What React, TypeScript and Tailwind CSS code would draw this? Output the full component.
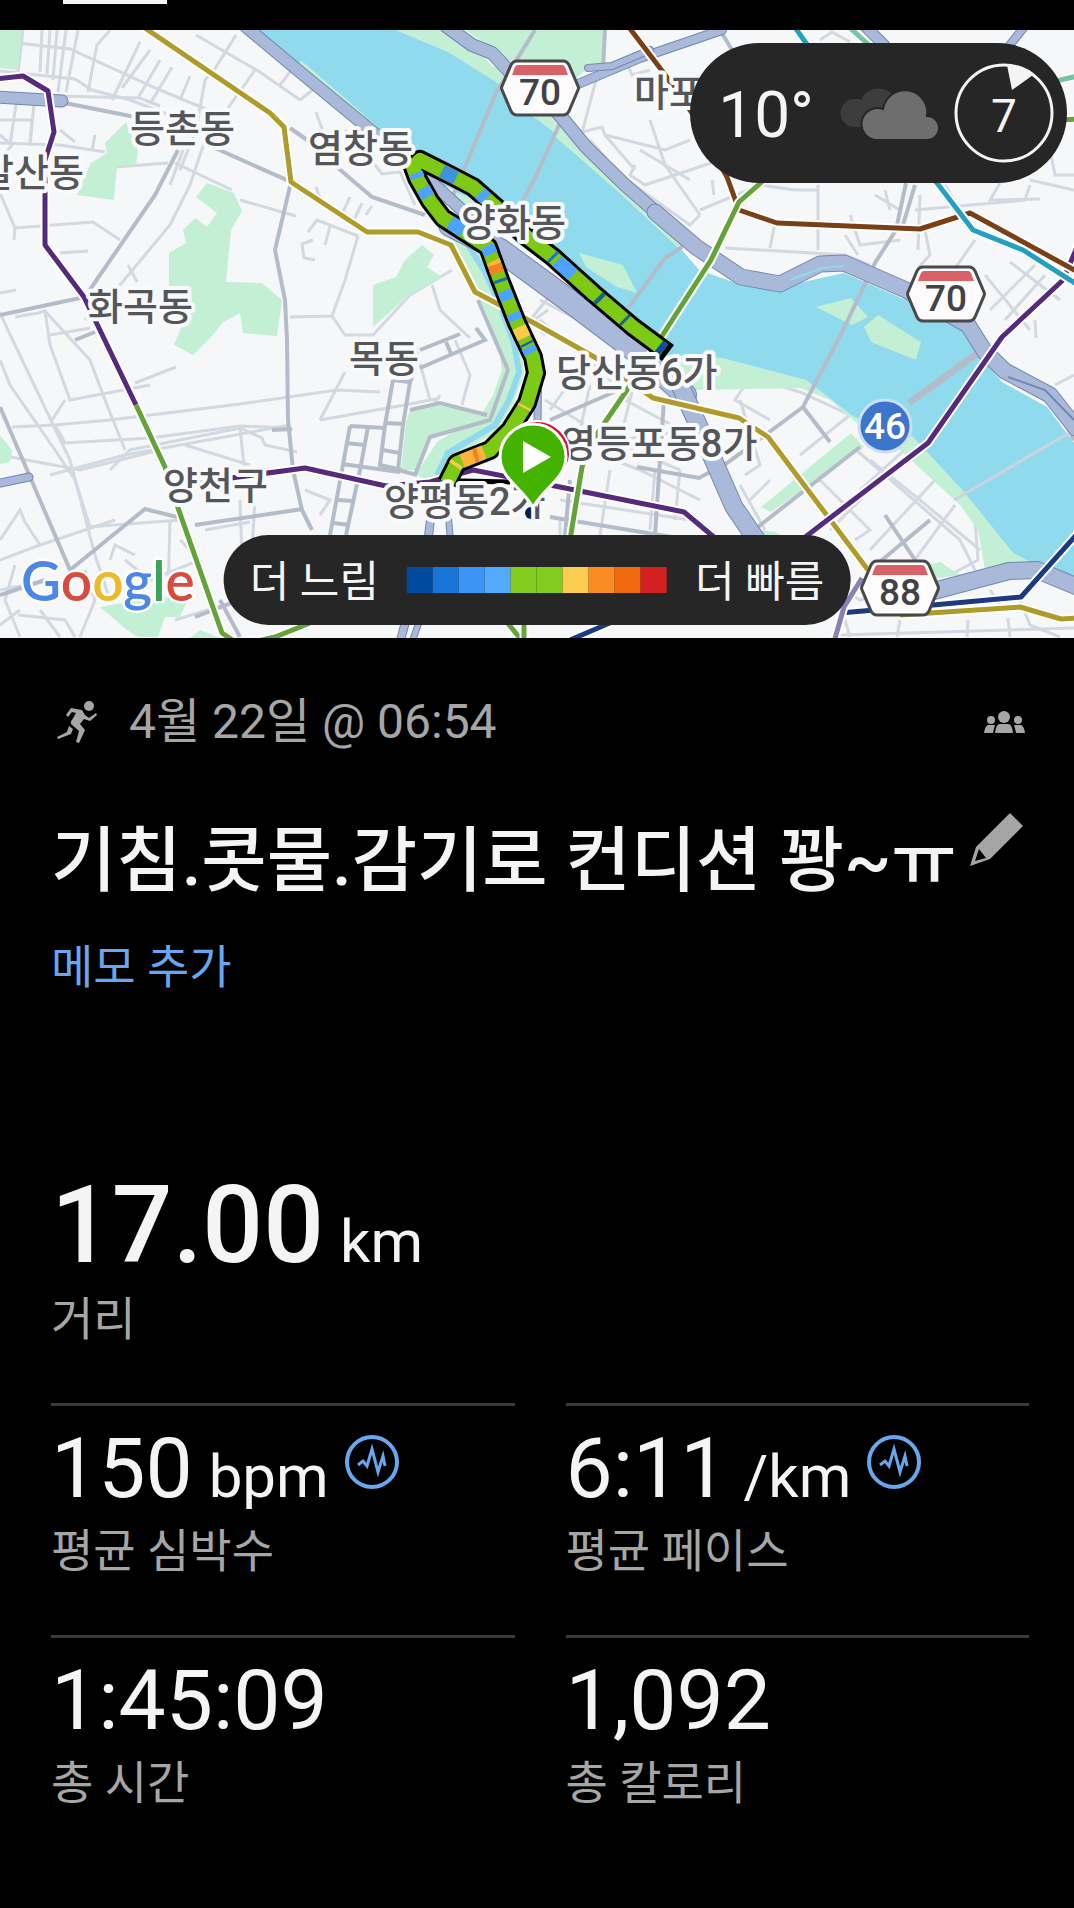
interface Segment {
    color: string
    points: string
}

interface Stat {
    value: string
    unit?: string
    label: string
    chart?: boolean
}

const MINOR_ROADS = [
    '0,71 75,79 92,90 130,100 175,117 205,130',
    '0,41 70,49 160,90 208,110',
    '42,30 40,72',
    '50,30 47,74',
    '57,30 53,80',
    '66,30 58,92',
    '78,30 66,92',
    '23,30 18,72',
    '110,30 97,45 88,92',
    '140,42 112,100',
    '150,50 122,88',
    '160,60 138,98',
    '172,67 150,104',
    '190,76 180,100',
    '58,96 140,98 160,106',
    '236,35 214,70 205,80 196,130 180,170',
    '196,35 260,72 300,100',
    '255,70 228,108',
    '290,72 280,85',
    '300,100 350,60',
    '0,120 32,120 30,142',
    '16,104 10,145',
    '34,104 30,146',
    '0,143 60,145 105,152',
    '95,135 92,150',
    '0,135 12,145 0,160',
    '60,130 75,142',
    '115,167 168,163',
    '175,163 232,190',
    '183,150 170,185',
    '240,200 296,216',
    '0,193 15,228 93,222 120,240',
    '15,228 14,240',
    '60,253 88,251',
    '205,140 190,185 170,225 120,285 85,320',
    '128,265 137,282',
    '308,232 317,220 358,236',
    '330,226 325,245',
    '313,240 302,244 304,258 315,260',
    '358,236 345,280 332,316 290,317',
    '332,316 345,335 373,335 410,295 452,270',
    '432,285 440,310 470,338',
    '316,187 320,198',
    '350,197 340,218',
    '362,203 352,224',
    '372,206 366,215',
    '316,112 326,140',
    '345,130 355,140 382,174 400,172 415,205',
    '0,293 16,290',
    '0,313 15,345 70,460 95,555 110,600',
    '15,317 38,313 45,311 50,345 70,400 150,385',
    '45,311 90,360 105,400 125,450',
    '0,360 10,385 55,450 75,480',
    '12,427 55,425 110,420 240,404 337,390 380,392',
    '55,425 65,443 150,438 240,426 290,428',
    '65,400 52,420',
    '50,335 90,328',
    '135,383 176,367',
    '110,470 130,450 240,428 262,438 265,445 297,452',
    '240,428 245,475',
    '0,455 80,470 160,450',
    '50,475 125,455 290,425',
    '185,445 250,465',
    '345,372 320,420',
    '320,420 410,404 440,398',
    '75,480 90,527 180,520',
    '0,540 20,510 25,522 40,545 0,560',
    '40,545 115,520',
    '170,522 168,590',
    '185,520 188,545',
    '205,530 250,522',
    '240,500 242,560',
    '255,500 252,550',
    '180,540 200,560 150,580 125,560',
    '0,590 50,580 55,600',
    '15,565 5,600 20,637',
    '18,615 65,620 75,637',
    '40,610 60,637',
    '110,560 115,545 135,555',
    '85,570 95,600 80,637',
    '0,625 20,610',
    '175,620 240,600',
    '415,345 430,400',
    '455,340 470,375 462,405',
    '430,410 440,395',
    '305,490 330,500 320,515',
    '600,65 580,140 600,170',
    '570,135 602,127 605,135 665,150 690,140',
    '605,135 635,170',
    '640,150 690,180',
    '650,120 665,165 700,215',
    '635,165 630,175 645,185 720,160',
    '590,140 620,175 690,225 700,215',
    '626,60 632,75 650,70',
    '725,248 760,250 845,255 870,265',
    '775,223 770,248',
    '818,185 818,250',
    '700,210 760,185 795,190 818,190',
    '712,180 714,195',
    '850,215 860,245 900,240',
    '845,235 858,255',
    '875,195 900,210',
    '885,190 890,210',
    '920,195 918,250',
    '915,210 1025,200 1030,185',
    '1000,183 990,200 1040,199',
    '945,185 960,210',
    '925,230 930,255 918,268',
    '975,240 940,290',
    '985,275 1030,330',
    '1035,265 990,310',
    '1045,275 1005,320',
    '1010,262 1060,300',
    '1030,180 1074,190',
    '1050,150 1055,175 1074,175',
    '1035,320 1036,338',
    '1074,375 1055,385',
    '820,40 832,32 850,42',
    '745,320 760,345',
    '540,320 600,370 630,400',
    '548,310 520,330',
    '555,290 530,320 545,335',
    '540,300 575,318 590,300',
    '550,410 575,375',
    '545,400 610,440 680,470',
    '590,385 580,430',
    '625,400 700,440',
    '635,380 620,440 690,430',
    '600,455 640,470 700,500',
    '560,500 690,520',
    '610,470 600,535',
    '655,470 650,530',
    '680,470 675,520',
    '560,520 560,535',
    '745,385 735,400 770,420',
    '760,380 800,392 850,415 800,455',
    '740,400 760,465 745,475',
    '750,500 770,480',
    '845,440 885,475 960,540 975,570',
    '885,475 830,530',
    '910,445 860,490',
    '870,460 920,500 980,550',
    '935,480 870,550',
    '955,505 900,580',
    '820,480 850,510',
    '850,510 870,530 855,540',
    '975,520 978,560 950,575',
    '740,485 765,530',
    '800,560 860,600 940,575',
    '845,620 850,637',
    '900,620 897,637',
    '968,620 967,637',
    '1008,618 1010,637',
    '990,590 1000,605',
    '1020,600 1030,625 1060,637',
    '840,635 1074,628',
]

const MAJOR_ROADS = [
    '65,103 140,118',
    '215,148 291,182 275,250 285,300 287,340 288,420 293,470 302,510 312,530',
    '178,150 155,195 100,275 85,297 0,315',
    '290,128 310,142',
    '338,168 372,197 425,215',
    '0,407 70,570 145,509 177,517',
    '195,525 303,509',
    '272,430 292,429',
    '75,340 95,332',
    '420,350 460,334',
    '420,368 485,340 476,328',
    '446,342 452,356',
    '393,380 410,382 415,370',
    '393,380 385,425 380,465 402,470',
    '410,382 403,425 398,470 417,475',
    '385,423 405,424',
    '383,450 400,453',
    '350,426 385,428',
    '350,426 342,470 330,535',
    '368,427 360,470 346,535',
    '345,443 365,445',
    '342,464 400,472',
    '338,500 353,501',
    '333,523 350,525',
    '410,410 440,403 487,415',
    '478,300 508,370 490,420 430,437 415,475',
    '0,595 45,580',
    '195,617 260,592',
    '220,600 240,637',
    '630,385 550,420',
    '664,400 655,535',
    '570,480 565,535',
    '550,517 690,540',
    '860,447 754,530',
    '803,407 830,442',
    '885,515 935,590',
    '930,520 870,570',
    '1050,395 1074,440',
]

const BRIDGES = [
    '535,30 496,93 451,200',
    '560,123 534,180 520,205',
    '605,30 603,68',
    '720,30 732,50',
    '682,247 665,258 629,307',
    '906,183 896,230 875,263 844,328 803,407 768,433 727,463 699,478 637,467',
    '915,185 903,225',
]

const HIGHWAYS = [
    { width: 13, points: '245,26 300,72 379,137 440,190 500,245' },
    { width: 24, points: '450,225 500,250 575,305 645,358 685,395' },
    { width: 19, points: '680,385 699,427 720,475 734,507 760,545' },
    { width: 14, points: '446,26 472,45 492,53 510,72 558,113 586,147 625,185 665,220' },
    { width: 17, points: '655,212 696,247 741,277 780,284 820,264 844,263 906,290 968,325 985,352 1005,371 1050,395 1076,428' },
    { width: 10, points: '578,84 640,58 722,30' },
    { width: 8, points: '588,68 612,66 650,50' },
    { width: 18, points: '915,596 1009,571 1037,570 1078,587' },
    { width: 13, points: '-4,97 62,101' },
    { width: 9, points: '-4,484 29,477' },
    { width: 12, points: '865,26 885,46' },
    { width: 9, points: '1025,26 1009,46' },
    { width: 9, points: '433,500 428,540 400,642' },
    { width: 7, points: '447,500 450,535 412,642' },
    { width: 8, points: '538,380 537,470' },
]

const PARKS = [
    '0,30 22,30 18,70 0,68',
    '126,122 138,150 136,165 117,166 114,200 77,195 91,163 107,153 105,143',
    '207,183 234,193 242,211 231,230 226,282 262,283 282,300 277,336 243,333 240,313 222,323 213,335 193,355 174,345 188,310 169,287 169,253 186,243 183,230 195,218 207,227 217,213 196,197',
    '422,245 434,255 427,267 442,277 406,297 389,313 373,327 373,285 396,277 405,260',
    '410,410 444,405 482,412 487,418 431,437 417,470 401,470 406,423',
    '100,607 140,600 190,595 180,617 165,617 158,637 138,637 127,630',
    '0,435 12,450 10,462 0,464',
    '190,638 200,630 220,638',
    '396,30 448,52 498,83 534,117 682,247 640,200 560,122 520,75 492,66 475,47 448,30',
    '465,30 605,30 603,65 585,70 572,82 540,72 512,62',
    '665,355 722,358 806,380 854,417 913,437 964,492 1013,553 1040,565 1009,572 985,570 978,530 960,505 900,450 865,430 830,400 800,388 690,390',
    '761,507 851,433 864,447 771,512',
    '758,530 775,532 790,540 760,540',
    '855,582 940,562 960,575 860,590',
]

const ISLANDS = [
    '579,253 623,265 637,293 617,287 586,267',
    '816,307 851,298 868,317 852,325',
    '864,327 878,315 921,342 916,360 871,342',
]

const SUBWAYS: Segment[] = [
    { color: '#ae9b2a', points: '142,26 270,113 284,127 291,182 367,232 418,232 451,245 475,292 534,323 596,358 653,398 739,418 768,437 868,570' },
    { color: '#ae9b2a', points: '900,615 930,613 1020,607 1061,619 1078,618' },
    { color: '#552a7a', points: '-4,79 23,76 48,91 54,132 45,160 45,245 84,297 136,405' },
    { color: '#63a337', points: '136,405 165,467 177,505 222,633 240,645 275,637 310,623' },
    { color: '#552a7a', points: '180,487 231,478 305,468 386,486 430,482 473,470 560,487 684,512 715,538' },
    { color: '#552a7a', points: '800,541 928,443 1002,337 1063,280 1078,245' },
    { color: '#7a4015', points: '628,26 663,72 692,113 727,177 739,210 777,223 920,229 970,213 1078,272' },
    { color: '#239fc0', points: '794,26 806,43 937,183 973,230 1023,250 1078,285' },
    { color: '#63a337', points: '765,179 739,202 711,260 629,387 593,440 582,467 570,540' },
    { color: '#63a337', points: '1060,120 1078,119' },
    { color: '#77c4a4', points: '848,26 870,46' },
    { color: '#77c4a4', points: '1056,81 1078,76' },
    { color: '#1c3a82', points: '840,613 933,605 1021,597 1078,533' },
    { color: '#1c3a82', points: '570,640 612,622' },
    { color: '#8a80b8', points: '862,578 844,607 834,642' },
    { color: '#63a337', points: '505,620 520,638' },
    { color: '#63a337', points: '524,620 524,640' },
]

const ROUTE =
    '664,350 633,327 593,293 553,257 523,234 497,208 473,187 450,175 420,160 413,167 417,178 430,201 443,218 488,247 500,280 517,323 533,357 536,373 527,403 510,430 490,450 457,463 447,483'

const PACE_SEGMENTS: Segment[] = [
    { color: '#0b4f9e', points: '664,350 659,346' },
    { color: '#1b5f8a', points: '626,321 624,319' },
    { color: '#1b5f8a', points: '601,300 598,297' },
    { color: '#4da3ff', points: '573,275 557,261' },
    { color: '#1a6fd0', points: '554,258 552,256' },
    { color: '#4da3ff', points: '486,199 480,193' },
    { color: '#3f93dd', points: '456,178 442,171' },
    { color: '#4da3ff', points: '416,173 418,178' },
    { color: '#4da3ff', points: '423,188 428,197' },
    { color: '#4da3ff', points: '450,222 463,231' },
    { color: '#4da3ff', points: '487,246 491,254' },
    { color: '#fbb33c', points: '493,261 495,265' },
    { color: '#f4801f', points: '495,265 497,273' },
    { color: '#1b6fb8', points: '500,279 501,282' },
    { color: '#4da3ff', points: '504,291 508,300' },
    { color: '#4da3ff', points: '513,313 516,320' },
    { color: '#fbc84c', points: '519,327 524,338' },
    { color: '#1a5fa8', points: '526,343 527,345' },
    { color: '#4da3ff', points: '528,347 531,353' },
    { color: '#fbc84c', points: '525,406 524,408' },
    { color: '#fbb33c', points: '484,452 462,461' },
    { color: '#f4801f', points: '478,455 474,456' },
    { color: '#fbc84c', points: '457,463 455,466' },
]

const PLACES = [
    { x: 130, y: 142, name: '등촌동' },
    { x: 308, y: 162, name: '염창동' },
    { x: -21, y: 186, name: '발산동' },
    { x: 88, y: 320, name: '화곡동' },
    { x: 461, y: 236, name: '양화동' },
    { x: 634, y: 106, name: '마포' },
    { x: 349, y: 372, name: '목동' },
    { x: 163, y: 499, name: '양천구' },
    { x: 384, y: 515, name: '양평동2가' },
    { x: 556, y: 386, name: '당산동6가' },
    { x: 561, y: 457, name: '영등포동8가' },
]

const SHIELDS = [
    { x: 540, y: 88, route: '70' },
    { x: 946, y: 294, route: '70' },
    { x: 900, y: 588, route: '88' },
]

const PACE_COLORS = [
    '#004a9f',
    '#1976d8',
    '#3c94f7',
    '#54aaff',
    '#82cb1f',
    '#82cb1f',
    '#fbcc50',
    '#fb8c24',
    '#ee6a0c',
    '#d52022',
]

const STATS: Stat[] = [
    { value: '150', unit: 'bpm', label: '평균 심박수', chart: true },
    { value: '6:11', unit: '/km', label: '평균 페이스', chart: true },
    { value: '1:45:09', label: '총 시간' },
    { value: '1,092', label: '총 칼로리' },
]

function RouteMap() {
    return (
        <svg
            viewBox="0 30 1074 608"
            preserveAspectRatio="xMidYMid slice"
            className="block h-full w-full"
            fill="none"
            role="img"
            aria-label="활동 경로 지도"
        >
            <rect y="30" width="1074" height="608" fill="#f6f7f8" />

            <g stroke="#d3d9e1" strokeWidth="3">
                {MINOR_ROADS.map((points) => (
                    <polyline key={points} points={points} />
                ))}
            </g>

            <g fill="#c3f0d5">
                {PARKS.map((points) => (
                    <polygon key={points} points={points} />
                ))}
            </g>

            {/* river */}
            <polygon
                fill="#8fdaec"
                points="257,30 396,30 448,52 498,83 534,117 555,133 682,250 699,270 741,285 775,290 799,283 844,273 899,297 964,328 978,353 1002,382 1047,407 1074,443 1074,575 1037,565 1013,553 964,492 913,437 854,417 806,380 722,358 665,355 600,290 520,225 440,195 379,130 293,60"
            />
            <polyline stroke="#c3f0d5" strokeWidth="4" points="300,62 350,105 380,132" />
            <polyline stroke="#c3f0d5" strokeWidth="5" points="556,134 620,190 682,248" />
            <polygon fill="#c3f0d5" points="451,190 475,200 500,215 480,235 455,215" />
            <polygon fill="#f5f6f8" points="430,180 455,190 452,208 445,208" />
            <g fill="#c3f0d5">
                {ISLANDS.map((points) => (
                    <polygon key={points} points={points} />
                ))}
            </g>

            {/* stream */}
            <polyline stroke="#c3f0d5" strokeWidth="22" points="455,235 480,275 497,310 510,345 513,372 503,400 488,424 445,450 425,480" />
            <polyline stroke="#8fdaec" strokeWidth="6" points="462,235 485,272 500,305 514,343 519,372 509,400 495,425 448,453 437,475" />

            <g stroke="#b4bcc9" strokeWidth="4">
                {MAJOR_ROADS.map((points) => (
                    <polyline key={points} points={points} />
                ))}
                {BRIDGES.map((points) => (
                    <polyline key={points} points={points} />
                ))}
                <polyline strokeWidth="7" points="982,350 909,403" />
                <polyline stroke="#cbd3dd" strokeWidth="3" points="1074,430 954,500" />
            </g>

            {HIGHWAYS.map((road) => (
                <g key={road.points} strokeLinejoin="round" strokeLinecap="round">
                    <polyline points={road.points} stroke="#7386b0" strokeWidth={road.width} />
                    <polyline points={road.points} stroke="#a9b9d9" strokeWidth={road.width - 2} />
                </g>
            ))}
            <polyline points="790,280 822,268 844,266" stroke="#8fdaec" strokeWidth="2" />
            <polyline points="1008,377 1045,390 1074,420" stroke="#7386b0" strokeWidth="2" />

            {SUBWAYS.map((line) => (
                <g key={line.points} strokeLinejoin="round">
                    <polyline points={line.points} stroke="#ffffff" strokeWidth="9" />
                    <polyline points={line.points} stroke={line.color} strokeWidth="5" />
                </g>
            ))}

            <g strokeLinejoin="round">
                <polyline points="447,483 462,481 510,482" stroke="#000000" strokeWidth="5" />
                <polyline points="668,353 664,350" stroke="#000000" strokeWidth="20" />
                <polyline points={ROUTE} stroke="#000000" strokeWidth="20" />
                <polyline points={ROUTE} stroke="#7cc916" strokeWidth="14" />
                {PACE_SEGMENTS.map((segment) => (
                    <polyline
                        key={segment.points}
                        points={segment.points}
                        stroke={segment.color}
                        strokeWidth="14"
                    />
                ))}
                <circle cx="531" cy="513" r="6" fill="#06203f" />
            </g>

            <g
                fill="#55565a"
                stroke="#f8f9fb"
                strokeWidth="8"
                strokeLinejoin="round"
                paintOrder="stroke"
                fontSize="38"
                fontWeight="500"
                className="font-['Roboto','Noto_Sans_CJK_KR',sans-serif]"
            >
                {PLACES.map((place) => (
                    <text key={place.name} x={place.x} y={place.y}>
                        {place.name}
                    </text>
                ))}
            </g>

            {SHIELDS.map((shield) => (
                <g key={`${shield.x}-${shield.route}`} transform={`translate(${shield.x} ${shield.y})`}>
                    <path
                        d="M-23 -27H23Q27 -27 29 -23L38 -2Q39 0 38 2L29 23Q27 27 23 27H-23Q-27 27 -29 23L-38 2Q-39 0 -38 -2L-29 -23Q-27 -27 -23 -27Z"
                        fill="#fdfbfb"
                        stroke="#47494b"
                        strokeWidth="3"
                    />
                    <path d="M-22 -23H22Q24 -23 25 -21L28 -13H-28L-25 -21Q-24 -23 -22 -23Z" fill="#d96266" />
                    <text
                        y="17"
                        textAnchor="middle"
                        fill="#404244"
                        fontSize="37"
                        fontWeight="500"
                        className="font-['Roboto',sans-serif]"
                    >
                        {shield.route}
                    </text>
                </g>
            ))}

            <circle cx="885" cy="426" r="26" fill="#3d75ca" stroke="#cbdffa" strokeWidth="3" />
            <text
                x="885"
                y="439"
                textAnchor="middle"
                fill="#ffffff"
                fontSize="37"
                fontWeight="500"
                className="font-['Roboto',sans-serif]"
            >
                46
            </text>

            {/* finish pin peeks out behind the start pin */}
            <path d="M537 505C529 483 504 474 504 454A33 33 0 0 1 570 454C570 474 545 483 537 505Z" fill="#d8143c" stroke="#ffffff" strokeWidth="2" />
            <path d="M533 508C525 490 500 479 500 457A33 33 0 0 1 566 457C566 479 541 490 533 508Z" fill="#43b300" stroke="#ffffff" strokeWidth="3" />
            <path d="M523 441L551 457L523 473Z" fill="#ffffff" />

            <text
                x="21"
                y="601"
                fontSize="55"
                fontWeight="600"
                stroke="#ffffff"
                strokeWidth="5"
                strokeLinejoin="round"
                paintOrder="stroke"
                className="font-['Lato',sans-serif]"
            >
                <tspan fill="#4c87e8">G</tspan>
                <tspan fill="#d84b3e">o</tspan>
                <tspan fill="#ecb92c">o</tspan>
                <tspan fill="#4c87e8">g</tspan>
                <tspan fill="#3ba45b">l</tspan>
                <tspan fill="#d84b3e">e</tspan>
            </text>
        </svg>
    )
}

function CloudsIcon() {
    return (
        <svg viewBox="0 0 100 54" className="h-[54px] w-[100px]" aria-hidden="true">
            <path d="M15 41A14 14 0 0 1 14 13Q18 12 21 14A19 19 0 0 1 56 14V41Z" fill="#3d3d3d" />
            <path
                d="M37 54A16 16 0 1 1 43 23A22 22 0 0 1 87 30A12 12 0 0 1 87 54Z"
                fill="#6e6e6e"
                stroke="#262626"
                strokeWidth="2"
            />
        </svg>
    )
}

function WeatherBadge() {
    return (
        <div className="absolute top-[13px] right-[7px] flex h-[140px] items-center rounded-full bg-[#262626] pr-[13px] pl-7 text-[#f4f4f4]">
            <span className="pt-1.5 text-[64px] leading-none">10°</span>
            <div className="mr-3.5 ml-[26px]">
                <CloudsIcon />
            </div>
            <div className="relative flex h-[100px] w-[100px] items-center justify-center">
                <svg viewBox="0 0 100 100" className="absolute inset-0 h-full w-full" aria-hidden="true">
                    <circle cx="50" cy="50" r="48" fill="none" stroke="#f4f4f4" strokeWidth="3" />
                    <path d="M53 2Q67 3 79 12L58 27Z" fill="#f4f4f4" />
                </svg>
                <span className="pt-1.5 text-[46px] leading-none">7</span>
            </div>
        </div>
    )
}

function PaceLegend() {
    return (
        <div className="absolute bottom-[13px] left-1/2 flex h-[90px] -translate-x-1/2 items-center gap-7 rounded-full bg-[#262626] px-[26px] text-[43px] leading-none whitespace-nowrap text-[#f4f4f4]">
            <span className="pt-1">더 느림</span>
            <div className="flex h-[26px]">
                {PACE_COLORS.map((color, index) => (
                    <span key={index} className="w-[26px]" style={{ backgroundColor: color }} />
                ))}
            </div>
            <span className="pt-1">더 빠름</span>
        </div>
    )
}

function RunnerIcon() {
    return (
        <svg viewBox="0 0 40 42" className="h-[42px] w-10" fill="#a6a6a6" aria-hidden="true">
            <circle cx="32" cy="5" r="5" />
            <path d="M14 7L25 9L28 14L32 17L39 12L40 14L33 20L27 18L23 23L28 29L22 42L19 41L22 30L14 23Q13 21 15 19L19 12L15 11L11 16L9 14Z" />
            <path d="M12 25L16 28L14 33L1 38L0 36L10 31Z" />
        </svg>
    )
}

function GroupIcon() {
    return (
        <svg viewBox="0 0 41 22" className="h-[22px] w-[41px]" fill="#a6a6a6" aria-hidden="true">
            <circle cx="20" cy="6" r="6" />
            <circle cx="7" cy="9" r="4" />
            <circle cx="34" cy="9" r="4" />
            <path d="M11 22Q12 13 16 13H24Q28 13 29 22Z" />
            <path d="M0 22Q1 15 4 14H11Q10 17 9 22Z" />
            <path d="M41 22Q40 15 37 14H30Q31 17 32 22Z" />
        </svg>
    )
}

function PencilIcon() {
    return (
        <svg viewBox="0 0 53 53" className="h-[53px] w-[53px]" aria-hidden="true">
            <path d="M40 0L53 13L20 46L0 53L6 34Z" fill="#a6a6a6" />
            <path d="M9 36L16 45L5 48Z" fill="#000000" />
        </svg>
    )
}

function ChartIcon() {
    return (
        <svg viewBox="0 0 54 54" className="h-[54px] w-[54px]" fill="none" stroke="#68a6ee" aria-hidden="true">
            <circle cx="27" cy="27" r="25" strokeWidth="4" />
            <path d="M13 30L18 26L22 31L27 14L33 37L38 21L40 31" strokeWidth="3" strokeMiterlimit="8" />
        </svg>
    )
}

function StatCell({ stat }: { stat: Stat }) {
    return (
        <div className="border-t-[3px] border-[#3b3b3b] pt-[13px] pb-14">
            <div className="flex h-[100px] items-start gap-4">
                <p className="flex items-baseline gap-4 text-[84px] leading-[100px]">
                    {stat.value}
                    {stat.unit && <span className="text-[60px] leading-none">{stat.unit}</span>}
                </p>
                {stat.chart && (
                    <button type="button" className="mt-4" aria-label={`${stat.label} 그래프`}>
                        <ChartIcon />
                    </button>
                )}
            </div>
            <p className="mt-1 text-[46px] leading-[56px] text-[#a6a6a6]">{stat.label}</p>
        </div>
    )
}

export default function App() {
    return (
        <div className="min-h-screen bg-black font-['Roboto','Noto_Sans_CJK_KR',sans-serif] text-[#f4f4f4]">
            <header className="h-[30px]">
                <div className="ml-[63px] h-1 w-[104px] bg-[#f4f4f4]" />
            </header>

            <section className="relative aspect-[1074/608] overflow-hidden">
                <RouteMap />
                <WeatherBadge />
                <PaceLegend />
            </section>

            <main className="pt-14 pr-[45px] pl-[51px]">
                <div className="flex items-center justify-between pr-1 pl-1.5">
                    <div className="flex items-center gap-8">
                        <RunnerIcon />
                        <p className="text-[48px] leading-[56px] text-[#a6a6a6]">4월 22일 @ 06:54</p>
                    </div>
                    <GroupIcon />
                </div>

                <div className="mt-[63px] flex items-start justify-between pr-1.5">
                    <h1 className="pt-1 text-[71px] leading-[88px] font-medium whitespace-nowrap">
                        기침.콧물.감기로 컨디션 꽝~ㅠ
                    </h1>
                    <button type="button" aria-label="제목 편집">
                        <PencilIcon />
                    </button>
                </div>

                <button type="button" className="mt-[34px] block text-[46px] leading-[56px] text-[#68a6ee]">
                    메모 추가
                </button>

                <div className="mt-[166px] pb-14">
                    <p className="flex items-baseline gap-4 text-[107px] leading-[130px] font-medium">
                        17.00
                        <span className="text-[60px] leading-none font-normal">km</span>
                    </p>
                    <p className="text-[46px] leading-[56px] text-[#a6a6a6]">거리</p>
                </div>

                <div className="grid grid-cols-2 gap-x-[51px]">
                    {STATS.map((stat) => (
                        <StatCell key={stat.label} stat={stat} />
                    ))}
                </div>
            </main>
        </div>
    )
}
